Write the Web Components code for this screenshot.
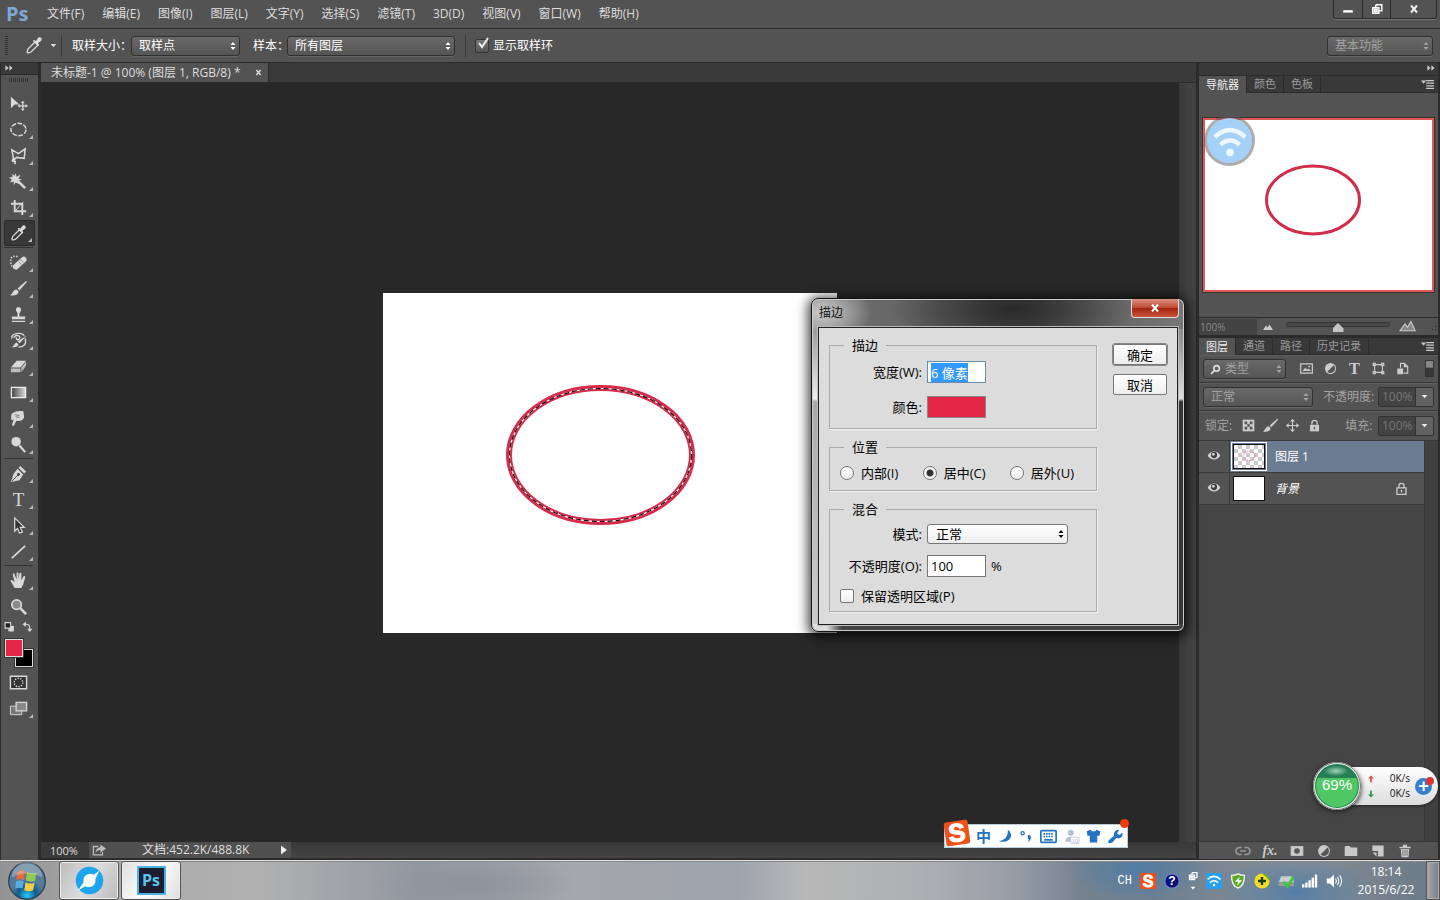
<!DOCTYPE html>
<html lang="zh-CN">
<head>
<meta charset="utf-8">
<title>未标题-1 @ 100%</title>
<style>
  html, body {
    height: 100%;
    margin: 0;
    overflow: hidden;
    background: #282828;
  }

  body {
    --line: #2b2b2b;
    --panel: #535353;
    --text: #dedede;
    --dim: #a3a3a3;
    --red: #e32645;
    color: var(--text);
    font: 12px/16px "Open Sans", "Noto Sans CJK SC", sans-serif;
  }
</style>
</head>
<body>
<photo-app></photo-app>

<script>
const icons = {
  move: `<path d="M2 3v12l4-4h5z"/><path d="M14.500 7l2 2.500h-1.300v2.300h2.300v-1.300l2.500 2-2.500 2v-1.300h-2.300v2.300h1.300l-2 2.500-2-2.500h1.300v-2.300h-2.300v1.300l-2.500-2 2.500-2v1.300h2.300V9.500h-1.300z"/>`,
  ellipse: `<ellipse cx="10" cy="10" rx="8" ry="6.500" fill="none" stroke="currentColor" stroke-width="1.500" stroke-dasharray="5 1.500"/>`,
  lasso: `<path d="M3 4l7 4 7-5-1 10-8-1-3 3zM6 13c-3 0-3 4-1 3s2 1 1 3" fill="none" stroke="currentColor" stroke-width="1.600"/>`,
  wand: `<path d="M7 1l1 4 4-2-2 4 4 1-4 1 1 4-4-2-2 3v-4l-4 1 2-3-3-2 4-1-1-3 3 2z"/><path d="M9 9l8 8" stroke="currentColor" stroke-width="2.500"/>`,
  crop: `<path d="M6 2v12h12M2 6h12v12" fill="none" stroke="currentColor" stroke-width="2"/><path d="M7 13l8-9" stroke="currentColor"/>`,
  dropper: `<path d="M4 17l-1-1 1-3 7-7 3 3-7 7z" fill="none" stroke="currentColor" stroke-width="1.300"/><path d="M9 5l1-1 2 1 2-3c2-2 5 1 3 3l-3 2 1 2-1 1z"/>`,
  heal: `<path d="M9 4c-5-2-8 1-7 6 0 3 1 4 3 6" fill="none" stroke="currentColor" stroke-width="1.600" stroke-dasharray="1.500 1.500"/><rect x="3" y="8" width="17" height="6" rx="3" transform="rotate(-42 11 11)"/><path d="M9 8l5 5M11 6l5 5" stroke="#666" stroke-dasharray="1 1"/>`,
  brush: `<path d="M18 2c1 0 1 1 0 2l-7 8-2-2zM8 11l2 2c0 4-4 5-9 4 3-1 3-6 7-6z"/>`,
  stamp: `<path d="M10 2a3 3 0 0 1 2 5l-1 2v3h6v3H3v-3h6V9L8 7a3 3 0 0 1 2-5zM3 16.500h14V18H3z"/>`,
  history: `<path d="M18 5c0 1-6 7-7 8l-2-2zM8 12l2 2c-1 4-5 3-7 3 3-2 2-4 5-5z"/><path d="M3 8c-2-6 11-7 13-3M5 7c2-4 8-2 6 1-1 2-4 1-3-1M17 8c2 6-2 9-7 9" fill="none" stroke="currentColor" stroke-width="1.500"/>`,
  eraser: `<path d="M8 4h10l-6 7H2z"/><path d="M2 12h10v4H2zM13 11l5-6v4l-5 7z" opacity=".8"/>`,
  gradient: `<defs><linearGradient id="g"><stop stop-color="#444"/><stop offset="1" stop-color="#ddd"/></linearGradient></defs><path d="M2.500 4.500h15v11h-15z" fill="url(#g)" stroke="#eee" stroke-width="1.300"/>`,
  smudge: `<path d="M3 5c3-3 7-3 12-3l1 7c-2 4-6 4-8 3l-3 6-2-1 2-6-2 1c-1-2-1-5 0-7z"/><path d="M7 8l4 1M6 6l5 1" stroke="#777"/>`,
  dodge: `<circle cx="7.500" cy="7" r="5"/><path d="M11 11l6 7" stroke="currentColor" stroke-width="2.300"/>`,
  pen: `<path d="M12 2l6 6-2 2-6-6zM9 5l6 6-4 6-9 2 3-9z"/><path d="M3 18l7-7" stroke="#444"/><circle cx="10" cy="11" r="1.500" fill="#444"/>`,
  type: `<text x="10" y="17" text-anchor="middle" font-size="20" font-family="Liberation Serif, serif" fill="currentColor">T</text>`,
  path: `<path d="M6 2v14l3-3 2 5 3-1-2-5h4z" fill="#333" stroke="currentColor" stroke-width="1.300"/>`,
  line: `<path d="M3 17L17 4" stroke="currentColor" stroke-width="1.800"/>`,
  hand: `<path d="M6 18l-4-7c-1-2 1-2 2-1l2 2-2-8c0-2 2-2 2 0l2 5V3c0-2 2-2 2 0v6l1-6c0-2 2-1 2 0v7l2-4c1-1 2-1 2 1l-2 7-2 4z"/>`,
  zoom: `<circle cx="8" cy="8" r="5" fill="#888" stroke="currentColor" stroke-width="1.800"/><path d="M12 12l6 6" stroke="currentColor" stroke-width="2.800"/>`,
  defaults: `<path d="M8 9h10v10H8z"/><path d="M2 3h10v10H2z" fill="#222" stroke="currentColor" stroke-width="2"/>`,
  swap: `<path d="M5 6c7-1 10 2 9 9" fill="none" stroke="currentColor" stroke-width="2"/><path d="M1 6l6-5v10zM9 14h10l-5 6z"/>`,
  mask: `<path d="M1.500 3.500h17v13h-17z" fill="#333" stroke="currentColor" stroke-width="1.500"/><circle cx="10" cy="10" r="4.500" fill="none" stroke="currentColor" stroke-width="1.400" stroke-dasharray="1.400 1.400"/>`,
  screens: `<path d="M1.500 7.500h12v9h-12z" fill="#777" stroke="currentColor"/><path d="M7.500 3.500h11v9h-11z" fill="#888" stroke="currentColor" stroke-width="1.400"/>`,
  updown: `<path d="M10 2l5 6H5zM5 12h10l-5 6z"/>`,
  down: `<path d="M2 6h16l-8 9z"/>`,
  right: `<path d="M4 1v18l12-9z"/>`,
  double: `<path d="M1 3v14l8-7zM11 3v14l8-7z"/>`,
  menu: `<path d="M0 4h8L4 9z"/><path d="M8 4h12M8 8h12M8 12h12M8 16h12" stroke="currentColor" stroke-width="1.800"/>`,
  mountain: `<path d="M0 16l6-9 3 4 4-6 7 11z"/>`,
  mountains: `<path d="M1 15L7 7l3 4 4-7 5 11z" fill="#888" stroke="currentColor" stroke-width="1.300"/>`,
  search: `<circle cx="12" cy="8" r="5" fill="none" stroke="currentColor" stroke-width="3"/><path d="M8 12l-6 6" stroke="currentColor" stroke-width="3"/>`,
  picture: `<path d="M1 3h18v14H1z" fill="#555" stroke="currentColor" stroke-width="1.800"/><path d="M4 14l4-5 3 3 2-2 4 4z"/><circle cx="14" cy="7" r="1.300"/>`,
  adjust: `<circle cx="10" cy="10" r="8.500"/><path d="M5 15L15 5a7 7 0 0 1-10 10z" fill="#555"/>`,
  boldType: `<text x="10" y="18" text-anchor="middle" font-size="25" font-weight="700" font-family="Liberation Serif, serif" fill="currentColor">T</text>`,
  shape: `<path d="M4 4h12v12H4z" fill="none" stroke="currentColor" stroke-width="1.700"/><path d="M1 1h5v5H1zM14 1h5v5h-5zM1 14h5v5H1zM14 14h5v5h-5z"/><path d="M3 3h1v1H3zM16 3h1v1h-1zM3 16h1v1H3zM16 16h1v1h-1z" fill="#333"/>`,
  smart: `<path d="M7 9V2h6l5 5v10h-6" fill="none" stroke="currentColor" stroke-width="1.800"/><path d="M12 2v6h6M2 10h9v9H2z"/>`,
  checker: `<path d="M1 1h18v18H1z"/><path d="M4 4h4v4H4zM12 4h4v4h-4zM8 8h4v4H8zM4 12h4v4H4zM12 12h4v4h-4z" fill="#555"/>`,
  cross: `<path d="M10 1v18M1 10h18" stroke="currentColor" stroke-width="1.800"/><path d="M10 0l4 4H6zM10 20l4-4H6zM0 10l4-4v8zM20 10l-4-4v8z"/>`,
  lock: `<path d="M6 9V6a4 4 0 0 1 8 0v3" fill="none" stroke="currentColor" stroke-width="2"/><path d="M3 9h14v10H3z"/><path d="M9 12h2v4H9z" fill="#555"/>`,
  openLock: `<path d="M6 9V6a4 4 0 0 1 8 0v3M3 9h14v10H3z" fill="none" stroke="currentColor" stroke-width="2"/><path d="M9 12h2v4H9z"/>`,
  eye: `<path d="M1 11c4-8 14-8 18 0-4 7-14 7-18 0z"/><circle cx="10" cy="10" r="4.500" fill="#444"/><circle cx="9" cy="9" r="2"/>`,
  link: `<path d="M8 5H5a5 5 0 0 0 0 10h3M12 5h3a5 5 0 0 1 0 10h-3M6 10h8" fill="none" stroke="#999" stroke-width="2.400"/>`,
  addMask: `<path d="M1 3h18v14H1z"/><circle cx="10" cy="10" r="4" fill="#555"/>`,
  folder: `<path d="M1 4l1-1h6l2 2h9v12H1z"/>`,
  newLayer: `<path d="M2 2h16v16h-8v-8H2z"/><path d="M2 12h6v6z"/>`,
  trash: `<path d="M2 4h16v2H2zM7 1h6v3H7zM4 7h12l-1 12H5z"/><path d="M7 8v9M10 8v9M13 8v9" stroke="#555"/>`,
  share: `<path d="M9 5H2v12h13v-4" fill="none" stroke="currentColor" stroke-width="1.800"/><path d="M12 2l8 6-8 6v-4c-4 0-5 2-7 4 1-6 4-8 7-8z"/>`,
  minimize: `<path d="M2 12h16v4H2z" fill="#fff"/>`,
  restore: `<path d="M8 3h10v10h-4M8 3v4M3 8h10v9H3zM6 11h4v3H6z" fill="none" stroke="#fff" stroke-width="2.500"/>`,
  close: `<path d="M4 3l12 14M16 3L4 17" stroke="currentColor" stroke-width="4"/>`,
  wifi: `<path d="M2 8c5-5 11-5 16 0M5 12c3-3 7-3 10 0" fill="none" stroke="currentColor" stroke-width="2.400"/><circle cx="10" cy="16" r="2"/>`,
  sogou: `<g transform="rotate(-8 10 10)"><rect width="20" height="20" rx="2" fill="#ef4f1a"/><text x="10" y="17" text-anchor="middle" font-size="21" font-weight="700" font-family="Liberation Sans, sans-serif" fill="#fff" stroke="#fff">S</text></g>`,
  sogouTile: `<rect width="20" height="20" rx="1" fill="#ef4f1a"/><text x="10" y="17" text-anchor="middle" font-size="20" font-weight="700" font-family="Liberation Sans, sans-serif" fill="#fff" stroke="#fff">S</text>`,
  moon: `<path d="M13 1c10 7 2 20-12 15C9 16 14 9 13 1z"/>`,
  punctuation: `<circle cx="4" cy="5" r="2.500" fill="none" stroke="currentColor" stroke-width="2"/><path d="M12 8c6-2 7 6 0 11 2-4 2-5 0-6z"/>`,
  keyboard: `<rect x="1" y="3" width="18" height="14" rx="1" fill="none" stroke="currentColor" stroke-width="2"/><path d="M4 7h12M4 10h12" stroke="currentColor" stroke-width="2" stroke-dasharray="2 1"/><path d="M5 14h10" stroke="currentColor" stroke-width="2"/>`,
  person: `<circle cx="9" cy="5" r="4"/><path d="M2 17c0-9 12-9 14 0z"/><path d="M9 11h11v8H9z" fill="#fff" stroke="currentColor"/><text x="10" y="18" font-size="8" fill="currentColor" font-family="Liberation Sans, sans-serif">10</text>`,
  shirt: `<path d="M1 3l5-2c2 3 6 3 8 0l5 2-1 6h-3v9H5V9H2z"/>`,
  wrench: `<path d="M2 19c-2 0-2-2-1-4l7-6c-1-5 3-9 7-8l-3 5 3 2 4-3c2 6-4 9-8 7l-5 6z"/>`,
  orb: `<defs><radialGradient id="o" cy=".9"><stop stop-color="#28c9f5"/><stop offset=".5" stop-color="#135b91"/><stop offset=".9" stop-color="#567b98"/></radialGradient></defs><circle cx="10" cy="10" r="9.600" fill="url(#o)" stroke="#283e50" stroke-width=".7"/><path d="M5 5q2-1 4 0l-.6 4.500q-2-1-4 0z" fill="#e8683a"/><path d="M10 5.300q3 1.200 5 .2l-.8 4.500q-2 .8-4.800-.2z" fill="#91c951"/><path d="M4.300 10.300q2-1 4 0L7.700 14q-2-1-4 0z" fill="#56aee0"/><path d="M9.200 10.700q2 1.200 4.800.2l-.8 4q-2 1-4.600-.2z" fill="#f7ce43"/><path d="M2 8a8 8 0 0 1 16 0q-8-4-16 0" fill="#fff" opacity=".28"/>`,
  browser: `<circle cx="10" cy="10" r="9.500" fill="#1ca4ed"/><path d="M17 3l-3 6c1 4-3 7-7 5l-5 3 4-6c-1-4 3-7 7-5z" fill="#fff"/>`,
  question: `<circle cx="10" cy="10" r="9" fill="#09107d" stroke="#7485b8" stroke-width="1.500"/><text x="10" y="15" text-anchor="middle" font-size="15" font-weight="700" font-family="Liberation Sans, sans-serif" fill="#fff">?</text>`,
  wifiTile: `<rect width="20" height="20" rx="2" fill="#28a0f2"/><path d="M2 8c5-5 11-5 16 0M5 12c3-3 7-3 10 0" fill="none" stroke="#fff" stroke-width="2"/><circle cx="10" cy="15" r="1.500" fill="#fff"/>`,
  shield: `<path d="M10 1c3 2 6 2 8 2 0 9-2 13-8 16C4 16 2 12 2 3c3 0 5 0 8-2z" fill="#5ca822" stroke="#eee" stroke-width="1.800"/><path d="M12 5l-6 6h4l-1 5 6-7h-4z" fill="#fff"/>`,
  plusBall: `<circle cx="10" cy="10" r="9.500" fill="#f5df24"/><path d="M10 .5a9.500 9.500 0 0 1 9.500 9.500q-4-6-9.500-9.500z" fill="#49a827"/><path d="M10 5v10M5 10h10" stroke="#143d12" stroke-width="3"/>`,
  drive: `<path d="M4 4h13l3 7v5H1v-5z" fill="#c9ced2"/><path d="M1 11h19v5H1z" fill="#999"/><path d="M7 11l5 6 7-12" fill="none" stroke="#41c545" stroke-width="3.500"/>`,
  signal: `<path d="M0 14h3v4H0zM4 12h3v6H4zM8 9h3v9H8zM12 6h3v12h-3zM16 2h3v16h-3z" fill="#fff"/>`,
  speaker: `<path d="M1 7h4l5-5v16l-5-5H1z" fill="#fff"/><path d="M12 7q2 3 0 6M14 5q4 5 0 10M17 3q5 7 0 14" fill="none" stroke="#fff" stroke-width="1.300"/>`,
  upload: `<path d="M10 1l7 8h-5v10H8V9H3z"/>`,
  download: `<path d="M10 19l7-8h-5V1H8v10H3z"/>`,
};

function define(name, css, html) {
  const template = document.createElement("template");
  template.innerHTML = `<style>* { box-sizing: border-box; }${css}</style>${html}`;
  customElements.define(name, class extends HTMLElement {
    connectedCallback() {
      if (this.shadowRoot) {
        return;
      }
      this.attachShadow({ mode: "open" }).append(template.content.cloneNode(true));
    }
  });
}

class AppIcon extends HTMLElement {
  connectedCallback() {
    if (this.shadowRoot) {
      return;
    }
    const shadow = this.attachShadow({ mode: "open" });
    shadow.innerHTML = `
      <style>
        :host { display: inline-block; flex: none; width: var(--size, 18px); height: var(--size, 18px); }
        svg { display: block; width: 100%; height: 100%; overflow: visible; }
      </style>
      <svg viewBox="0 0 20 20" fill="currentColor" aria-hidden="true">${icons[this.getAttribute("name")] ?? ""}</svg>
    `;
  }
}
customElements.define("app-icon", AppIcon);

const icon = (name, size) => `<app-icon name="${name}"${size ? ` style="--size:${size}px"` : ""}></app-icon>`;

// Tabs are styled by tab-strip, so the reset leaves them alone.
const controls = `
  input, select { margin: 0; font: inherit; color: inherit; }
  :where(button:not([role="tab"])) { display: inline-flex; align-items: center; justify-content: center; margin: 0; padding: 0; border: 0; background: none; font: inherit; color: inherit; }
  .select { display: inline-flex; position: relative; }
  .select select {
    appearance: none; width: 100%; height: 20px; padding: 0 16px 0 7px; border: 1px solid #303030; border-radius: 3px;
    background: linear-gradient(#696969, #555); box-shadow: 0 1px #666; line-height: 16px;
  }
  .select app-icon { --size: 10px; position: absolute; right: 2px; top: 5px; pointer-events: none; }
`;

define("menu-bar", `${controls}
  :host { display: flex; align-items: center; height: 29px; padding-left: 6px; background: var(--panel); border-bottom: 1px solid var(--line); }
  .logo { width: 25px; margin-right: 16px; color: #7ca8d8; font-size: 20px; font-weight: 700; line-height: 28px; }
  nav { display: flex; gap: 18px; flex: 1; }
  .window { display: flex; align-self: flex-start; height: 19px; margin-right: 3px; border: 1px solid #292929; border-top: 0; border-radius: 0 0 3px 3px; box-shadow: 0 1px #777; }
  .window button { width: 28px; --size: 12px; color: #eee; }
  .window button + button { border-left: 1px solid #292929; }
  .window button:last-child { width: 46px; }
`, `
  <span class="logo">Ps</span>
  <nav>
    ${["文件(F)", "编辑(E)", "图像(I)", "图层(L)", "文字(Y)", "选择(S)", "滤镜(T)", "3D(D)", "视图(V)", "窗口(W)", "帮助(H)"].map((label) => `<button>${label}</button>`).join("")}
  </nav>
  <div class="window">
    <button aria-label="最小化">${icon("minimize")}</button>
    <button aria-label="还原">${icon("restore")}</button>
    <button aria-label="关闭">${icon("close", 10)}</button>
  </div>
`);

define("options-bar", `${controls}
  :host { display: flex; align-items: center; height: 34px; padding: 0 7px 0 5px; background: var(--panel); border-bottom: 1px solid var(--line); color: #fff; }
  .grip { width: 3px; height: 20px; margin-right: 15px; background: repeating-linear-gradient(#333 0 1px, transparent 1px 2px); }
  .tool { gap: 6px; width: 35px; color: #ddd; }
  .rule { width: 1px; height: 22px; background: #3b3b3b; }
  .rule.first { margin: 0 10px 0 3px; }
  .rule.last { margin: 0 9px 0 10px; }
  label { white-space: nowrap; }
  #size { width: 109px; }
  #sample { width: 168px; }
  .size-label { width: 59px; }
  .sample-label { width: 34px; margin-left: 13px; }
  input { appearance: none; width: 14px; height: 14px; margin-right: 4px; border: 1px solid #333; border-radius: 2px; background: linear-gradient(#777, #555); }
  .check { display: flex; align-items: center; position: relative; }
  .check svg { position: absolute; left: 2px; top: -1px; width: 13px; height: 13px; }
  .workspace { margin-left: auto; color: var(--dim); }
  #workspace { width: 106px; }
`, `
  <span class="grip"></span>
  <button class="tool" aria-label="吸管工具">${icon("dropper", 20)}${icon("down", 7)}</button>
  <span class="rule first"></span>
  <label class="size-label" for="size">取样大小：</label>
  <span class="select"><select id="size"><option>取样点</option></select>${icon("updown")}</span>
  <label class="sample-label" for="sample">样本：</label>
  <span class="select"><select id="sample"><option>所有图层</option></select>${icon("updown")}</span>
  <span class="rule last"></span>
  <label class="check"><input type="checkbox" checked><svg viewBox="0 0 13 13"><path d="M2 6l3 4 6-9" fill="none" stroke="#eee" stroke-width="2"/></svg>显示取样环</label>
  <span class="select workspace"><select id="workspace" aria-label="工作区"><option>基本功能</option></select>${icon("updown")}</span>
`);

const tool = (name, label, more = true) => `<button class="tool${more ? " more" : ""}" aria-label="${label}">${icon(name)}</button>`;

define("tool-bar", `${controls}
  :host { display: flex; flex-direction: column; width: 41px; border: solid var(--line); border-width: 0 3px 0 1px; background: var(--panel); color: #d8d8d8; }
  .top { height: 12px; padding-left: 4px; background: #393939; border-bottom: 1px solid var(--line); --size: 8px; line-height: 10px; color: #ccc; }
  .grip { width: 20px; height: 4px; margin: 3px 8px 8px; background: repeating-linear-gradient(90deg, #333 0 1px, transparent 1px 2px); }
  .tool { position: relative; width: 31px; height: 26px; margin-left: 3px; padding-right: 2px; --size: 19px; }
  .more::after { content: ""; position: absolute; right: 2px; bottom: 3px; border: 2px solid; border-color: transparent #bbb #bbb transparent; }
  .on { border: 1px solid #2b2b2b; border-radius: 2px; background: #383838; }
  hr { width: 29px; height: 1px; margin: 1px 3px; border: 0; background: #333; }
  .mini { display: flex; justify-content: space-between; height: 16px; padding: 2px 5px 0 3px; --size: 11px; }
  .swatches { display: grid; grid-template-columns: 10px 8px 10px; grid-template-rows: 10px 8px 10px; margin: 4px 0 2px 4px; }
  .swatches button { border: 1px solid #ddd; outline: 1px solid #333; background: #000; }
  .swatches .fg { grid-area: 1 / 1 / 3 / 3; background: var(--red); z-index: 1; }
  .swatches .bg { grid-area: 2 / 2 / 4 / 4; }
`, `
  <div class="top">${icon("double")}</div>
  <div class="grip"></div>
  ${tool("move", "移动", false)}${tool("ellipse", "椭圆选框")}${tool("lasso", "多边形套索")}${tool("wand", "魔棒")}${tool("crop", "裁剪")}
  ${tool("dropper", "吸管").replace("tool more", "tool more on")}
  <hr>
  ${tool("heal", "修复画笔")}${tool("brush", "画笔")}${tool("stamp", "仿制图章")}${tool("history", "历史记录画笔")}${tool("eraser", "橡皮擦")}${tool("gradient", "渐变")}${tool("smudge", "涂抹")}${tool("dodge", "减淡")}
  <hr>
  ${tool("pen", "钢笔")}${tool("type", "文字")}${tool("path", "路径选择")}${tool("line", "直线")}
  <hr>
  ${tool("hand", "抓手")}${tool("zoom", "缩放", false)}
  <div class="mini">${icon("defaults")}${icon("swap")}</div>
  <div class="swatches"><button class="fg" aria-label="前景色"></button><button class="bg" aria-label="背景色"></button></div>
  ${tool("mask", "快速蒙版", false)}${tool("screens", "屏幕模式")}
`);

define("document-window", `${controls}
  :host { display: grid; grid-template: auto 1fr auto / 1fr 17px; min-width: 0; background: #282828; }
  .tabs { grid-column: 1 / -1; display: flex; height: 20px; background: #3a3a3a; border-bottom: 1px solid #2b2b2b; }
  .tab { display: flex; align-items: center; gap: 14px; padding: 0 6px 0 10px; background: var(--panel); border-right: 1px solid #2b2b2b; white-space: nowrap; --size: 7px; }
  .stage { display: grid; place-items: center; min-height: 0; overflow: hidden; }
  .art { display: block; width: 454px; height: 340px; background: #fff; }
  .scroll { background: linear-gradient(90deg, #383838, #424242 60%, #404040); }
  .status { grid-column: 1 / -1; display: flex; align-items: center; height: 18px; background: linear-gradient(#383838, #454545); border-bottom: 2px solid #2b2b2b; font-size: 11px; line-height: 14px; }
  .zoom { width: 48px; height: 16px; padding-left: 9px; border: 0; background: #3a3a3a; }
  .info { display: flex; align-items: center; width: 202px; height: 16px; padding: 0 2px 0 3px; background: #505050; }
  .info app-icon { color: #bbb; }
  .info button app-icon { color: #eee; }
  .info span { flex: 1; padding-left: 36px; font-size: 12px; }
`, `
  <div class="tabs"><div class="tab"><span>未标题-1 @ 100% (图层 1, RGB/8) *</span><button aria-label="关闭文档">${icon("close")}</button></div></div>
  <div class="stage">
    <svg class="art" viewBox="0 0 454 340">
      <ellipse cx="217.500" cy="162" rx="91.500" ry="67" fill="none" stroke="#d82a4a" stroke-width="6"/>
      <ellipse cx="217.500" cy="162" rx="91" ry="66.500" fill="none" stroke="#fff" stroke-width="1.200"/>
      <ellipse cx="217.500" cy="162" rx="91" ry="66.500" fill="none" stroke="#111" stroke-width="1.200" stroke-dasharray="5 3"/>
    </svg>
  </div>
  <div class="scroll"></div>
  <div class="status">
    <input class="zoom" aria-label="缩放比例" value="100%">
    <div class="info">${icon("share", 14)}<span>文档:452.2K/488.8K</span><button aria-label="状态选项">${icon("right", 10)}</button></div>
  </div>
`);

define("tab-strip", `
  :host { display: flex; height: 17px; background: #393939; border-bottom: 1px solid var(--line); color: #999; font-size: 11px; }
  ::slotted(button) { padding: 0 7px; margin: 0; border: 0; border-right: 1px solid var(--line); background: none; color: inherit; font: inherit; height: 16px; line-height: 16px; white-space: nowrap; }
  ::slotted(button[aria-selected="true"]) { height: 17px; background: var(--panel); color: #f0f0f0; }
  app-icon { margin: 2px 4px 0 auto; color: #ccc; }
`, `<slot></slot>${icon("menu", 13)}`);

define("navigator-panel", `
  :host { display: block; background: var(--panel); border-bottom: 3px solid var(--line); }
  .view { position: relative; margin: 25px 4px; }
  .view svg.map { display: block; width: 100%; background: #fff; border: 2px solid #e25757; outline: 1px solid #333; }
  .hotspot { position: absolute; left: 1px; top: -3px; display: grid; place-items: center; width: 51px; height: 51px; border: 3px solid rgba(90, 90, 90, .5); border-radius: 50%; background: #a4d1f7 padding-box; color: #eef7ff; }
  .bar { display: flex; align-items: center; height: 18px; border-top: 1px solid var(--line); color: #888; font-size: 10px; }
  .bar input.zoom { width: 58px; height: 16px; margin-right: 6px; padding: 0 0 0 1px; border: 0; background: #434343; color: inherit; font: inherit; }
  .bar app-icon { color: #ccc; }
  .range { appearance: none; flex: 1; min-width: 0; height: 5px; margin: 0 9px 4px 13px; border: 1px solid #333; border-radius: 3px; background: #484848; }
  .range::-webkit-slider-thumb { appearance: none; width: 11px; height: 9px; margin-top: 6px; background: #c5c5c5; clip-path: polygon(50% 0, 100% 60%, 100% 100%, 0 100%, 0 60%); }
  .corner { flex: none; width: 10px; height: 10px; margin-left: 12px; background: radial-gradient(circle, #222 1px, transparent 1px) 0 0 / 3px 3px; clip-path: polygon(100% 0, 100% 100%, 0 100%); }
`, `
  <tab-strip role="tablist"><button role="tab" aria-selected="true">导航器</button><button role="tab">颜色</button><button role="tab">色板</button></tab-strip>
  <div class="view">
    <svg class="map" viewBox="0 0 227 170"><ellipse cx="108" cy="80" rx="46.500" ry="34" fill="none" stroke="#d22c4a" stroke-width="3"/></svg>
    <span class="hotspot">${icon("wifi", 38)}</span>
  </div>
  <div class="bar">
    <input class="zoom" aria-label="导航器缩放" value="100%">${icon("mountain", 10)}
    <input class="range" type="range" aria-label="缩放" value="50">${icon("mountains", 17)}<span class="corner"></span>
  </div>
`);

define("layer-row", `
  :host { display: flex; align-items: center; height: 32px; background: var(--panel); border-bottom: 1px solid #3b3b3b; color: #fff; }
  :host([selected]) { background: linear-gradient(90deg, var(--panel) 31px, #6b7c92 31px); }
  .eye { width: 31px; height: 31px; padding: 0; border: 0; border-right: 1px solid #3b3b3b; background: none; color: #d5d5d5; }
  .eye app-icon { color: inherit; }
  .thumb { width: 32px; height: 25px; margin: 0 10px 0 3px; border: 1px solid #111; background: #fff; outline: 0 solid #fff; }
  :host([selected]) .thumb { background: repeating-conic-gradient(#ccc 0 25%, #fff 0 50%) 0 0 / 8px 8px; outline: 1px solid #fff; outline-offset: 1px; }
  svg { display: none; }
  :host([selected]) svg { display: block; }
  app-icon { color: #ccc; }
  .lock { display: none; margin: 0 16px 0 auto; }
  :host([locked]) .lock { display: block; }
  :host([locked]) slot { font-style: italic; }
`, `
  <button class="eye" aria-label="显示图层">${icon("eye", 14)}</button>
  <span class="thumb"><svg viewBox="0 0 30 23"><ellipse cx="15" cy="11" rx="6" ry="4.500" fill="none" stroke="#d98b98" stroke-dasharray="2 1"/></svg></span>
  <slot></slot><app-icon class="lock" name="openLock" style="--size:13px"></app-icon>
`);

define("layers-panel", `${controls}
  :host { display: flex; flex: 1; flex-direction: column; min-height: 0; background: #454545; }
  .row { display: flex; align-items: center; background: var(--panel); border-bottom: 1px solid #393939; padding: 0 4px; color: var(--dim); box-shadow: inset 0 1px #5f5f5f; }
  .filter, .blend { height: 28px; }
  .lock { height: 30px; padding-left: 6px; }
  .filter .select { width: 83px; margin-right: 8px; }
  .filter select { padding-left: 21px; }
  .filter .select app-icon.lens { --size: 11px; left: 7px; right: auto; color: #ddd; }
  .filter > button { width: 24px; --size: 13px; color: #ccc; }
  .switch { width: 9px; height: 17px; margin-left: auto; border: 1px solid #333; background: linear-gradient(#888 40%, #383838 50%); }
  .blend .select { width: 110px; margin-right: 10px; }
  .number { display: flex; width: 56px; height: 20px; margin-left: auto; border: 1px solid #333; border-radius: 2px; background: #434343; }
  .number input { width: 36px; height: 18px; padding: 0 0 0 3px; border: 0; background: none; color: #777; }
  .number button { flex: 1; border-left: 1px solid #333; background: #626262; color: #eee; }
  .lock > button { width: 22px; --size: 13px; color: #ccc; }
  .lock > .name { margin-right: 5px; }
  .fill { margin-left: 20px; }
  .body { display: grid; grid-template-columns: 1fr 14px; flex: 1; }
  .scroll { background: #404040; border-left: 1px solid #383838; }
  .actions { display: flex; align-items: center; justify-content: flex-end; gap: 13px; height: 19px; padding-right: 26px; background: var(--panel); border-top: 1px solid #363636; border-bottom: 1px solid #2b2b2b; --size: 14px; color: #c9c9c9; }
  .fx { width: 14px; font: italic bold 14px/14px "Liberation Serif", serif; }
`, `
  <tab-strip role="tablist"><button role="tab" aria-selected="true">图层</button><button role="tab">通道</button><button role="tab">路径</button><button role="tab">历史记录</button></tab-strip>
  <div class="row filter">
    <span class="select"><app-icon class="lens" name="search"></app-icon><select aria-label="图层过滤"><option>类型</option></select>${icon("updown")}</span>
    <button aria-label="像素">${icon("picture")}</button><button aria-label="调整">${icon("adjust")}</button><button aria-label="文字">${icon("boldType")}</button><button aria-label="形状">${icon("shape")}</button><button aria-label="智能对象">${icon("smart")}</button>
    <span class="switch"></span>
  </div>
  <div class="row blend">
    <span class="select"><select aria-label="混合模式"><option>正常</option></select>${icon("updown")}</span>
    <label for="opacity">不透明度:</label><span class="number"><input id="opacity" value="100%"><button aria-label="调整不透明度">${icon("down", 7)}</button></span>
  </div>
  <div class="row lock">
    <span class="name">锁定:</span>
    <button aria-label="锁定透明">${icon("checker")}</button><button aria-label="锁定像素">${icon("brush", 17)}</button><button aria-label="锁定位置">${icon("cross")}</button><button aria-label="锁定全部">${icon("lock")}</button>
    <label class="fill" for="fill">填充:</label><span class="number"><input id="fill" value="100%"><button aria-label="调整填充">${icon("down", 7)}</button></span>
  </div>
  <div class="body">
    <div><layer-row selected>图层 1</layer-row><layer-row locked>背景</layer-row></div>
    <div class="scroll"></div>
  </div>
  <div class="actions">
    ${icon("link")}<button class="fx" aria-label="图层样式">fx.</button>${icon("addMask")}${icon("adjust")}${icon("folder")}${icon("newLayer")}${icon("trash")}
  </div>
`);

define("side-panels", `
  :host { display: flex; flex-direction: column; width: 244px; border: solid var(--line); border-width: 0 2px 0 3px; }
  .top { height: 13px; padding-right: 3px; text-align: right; line-height: 10px; background: #393939; border-bottom: 1px solid var(--line); color: #ccc; }
`, `<div class="top">${icon("double", 8)}</div><navigator-panel></navigator-panel><layers-panel></layers-panel>`);

define("option-group", `
  :host { display: block; }
  fieldset { display: flex; flex-direction: column; gap: 10px; min-width: 0; margin: 0; padding: var(--group-pad, 8px 10px); border: 1px solid #aaa; box-shadow: 1px 1px #f2f2f2; }
  legend { margin-left: 4px; padding: 0 8px; line-height: 18px; background: #dcdcdc; }
  :host([loose]) fieldset { gap: 13px; }
`, `<fieldset><legend><slot name="title"></slot></legend><slot></slot></fieldset>`);

define("stroke-dialog", `${controls}
  :host { display: block; width: 374px; padding: 0 6px 6px; border: 1px solid #151515; border-radius: 7px; color: #000; font-size: 13px; line-height: 18px;
    background:
      radial-gradient(ellipse 50px 30px at 10px 14px, #c8c8c8, transparent) no-repeat 0 0 / 100% 30px,
      radial-gradient(ellipse 120px 50px at 200px 10px, #292929, transparent) no-repeat 0 0 / 100% 30px,
      linear-gradient(90deg, #888, #6a6a6a 15%, #555 60%, #777) no-repeat 0 0 / 100% 30px,
      linear-gradient(90deg, #ddd 4%, #444 8%) 0 100% / 100% 7px no-repeat,
      linear-gradient(#666, #ddd 30%, #333 31%) 100% 0 / 7px 100% no-repeat,
      linear-gradient(#777, #eee 30%, #aaa 31%, #ccc);
    box-shadow: inset 0 0 0 1px #ccc, 0 2px 12px 3px rgba(0, 0, 0, .75); }
  header { display: flex; justify-content: space-between; height: 28px; padding-left: 1px; color: #111; font-size: 12px; line-height: 28px; }
  header button { width: 48px; height: 19px; margin-right: -1px; border: 1px solid #ddd; border-top: 0; border-radius: 0 0 4px 4px; background: linear-gradient(#d99281, #bf4a33 48%, #a12312 50%, #ca5439); color: #fff; --size: 10px; }
  .content { display: flex; gap: 16px; min-height: 298px; padding: 8px 10px 12px; border: 1px solid #222; outline: 1px solid #bbb; background: #dcdcdc; }
  .groups { width: 268px; display: flex; flex-direction: column; justify-content: space-between; }
  .buttons { flex: 1; display: flex; flex-direction: column; gap: 9px; padding-top: 8px; }
  .buttons button { height: 21px; border: 1px solid #777; border-radius: 2px; background: linear-gradient(#fff, #eee); }
  .buttons .default { outline: 1px solid #888; }
  .row { display: flex; align-items: center; gap: 5px; min-height: 22px; }
  .row > label:first-child { width: 82px; text-align: right; }
  .text { width: 59px; height: 22px; padding: 0 3px; border: 1px solid #777; background: #fff; outline: 0; }
  #width { border-color: #6c8aad; }
  #width::selection { background: #3399ff; color: #fff; }
  .swatch { width: 59px; height: 22px; border: 1px solid #888; background: var(--red); }
  .select select { width: 141px; height: 20px; padding-left: 8px; border-color: #777; box-shadow: none; background: linear-gradient(#fff, #eee); }
  .radios { display: flex; justify-content: space-between; padding: 0 12px 0 0; }
  .radios label, .check { display: flex; align-items: center; gap: 7px; min-height: 18px; }
  .radios input, .check input { appearance: none; width: 14px; height: 14px; border: 1px solid #777; background: linear-gradient(#fff, #eee); }
  .radios input { border-radius: 50%; }
  .radios input:checked { background: radial-gradient(circle, #333 0 3px, #f5f5f5 4px); }
  .check input { border-radius: 2px; }
  .stroke { --group-pad: 7px 10px 10px; }
  .blend { --group-pad: 5px 10px 6px; }
`, `
  <header><span>描边</span><button aria-label="关闭">${icon("close")}</button></header>
  <div class="content">
    <div class="groups">
      <option-group class="stroke" loose><span slot="title">描边</span>
        <div class="row"><label for="width">宽度(W):</label><input id="width" class="text" value="6 像素"></div>
        <div class="row"><label for="color">颜色:</label><button id="color" class="swatch" aria-label="颜色"></button></div>
      </option-group>
      <option-group><span slot="title">位置</span>
        <div class="radios"><label><input type="radio" name="place">内部(I)</label><label><input type="radio" name="place" checked>居中(C)</label><label><input type="radio" name="place">居外(U)</label></div>
      </option-group>
      <option-group class="blend"><span slot="title">混合</span>
        <div class="row"><label for="mode">模式:</label><span class="select"><select id="mode"><option>正常</option></select>${icon("updown")}</span></div>
        <div class="row"><label for="alpha">不透明度(O):</label><input id="alpha" class="text" value="100"><span>%</span></div>
        <label class="check"><input type="checkbox">保留透明区域(P)</label>
      </option-group>
    </div>
    <div class="buttons"><button class="default">确定</button><button>取消</button></div>
  </div>
`);

define("input-method", `
  :host { display: flex; align-items: center; justify-content: space-between; width: 184px; height: 24px; padding: 0 4px 0 0; background: #fff; border: 1px solid #b8cede; color: #2374c2; --size: 15px; }
  .logo { --size: 24px; margin-top: -2px; }
  b { font: 700 15px/20px "Noto Sans CJK SC", sans-serif; }
  .muted { color: #b9bfd2; }
  .last { position: relative; height: 15px; }
  .last::after { content: ""; position: absolute; right: -6px; top: -10px; width: 9px; height: 9px; border-radius: 50%; background: #f23c07; }
`, `<span class="logo"><app-icon name="sogou"></app-icon></span><b>中</b>${icon("moon")}${icon("punctuation", 13)}${icon("keyboard", 17)}<app-icon class="muted" name="person"></app-icon>${icon("shirt")}<span class="last">${icon("wrench")}</span>`);

define("speed-meter", `
  :host { display: flex; align-items: center; width: 125px; height: 48px; color: #111; font: 10px/15px "Open Sans", sans-serif; }
  .ball { position: relative; z-index: 1; width: 48px; height: 48px; border: 2px solid #eee; border-radius: 50%; outline: 1px solid #777; outline-offset: -1px; background: radial-gradient(ellipse 12px 5px at 21px 7px, #9fd3bb, transparent), linear-gradient(#278055 31%, #4fc765 32%); box-shadow: inset 0 0 0 1px #207c4c, 0 2px 5px #222; color: #fff; font: 15px/42px "Liberation Sans", sans-serif; text-align: center; }
  .pill { flex: 1; display: flex; align-items: center; height: 38px; margin-left: -24px; padding: 0 6px 0 30px; border-radius: 0 19px 19px 0; background: linear-gradient(#fff, #ddd); box-shadow: 0 1px 3px #222; }
  .arrows { display: grid; gap: 7px; --size: 8px; color: #dc4b3b; }
  .arrows app-icon + app-icon { color: #23924e; }
  .rates { flex: 1; text-align: right; margin-right: 5px; }
  .plus { position: relative; width: 17px; height: 17px; border-radius: 50%; background: #357ed2; color: #fff; font: 700 18px/16px "Liberation Sans", sans-serif; text-align: center; }
  .plus::after { content: ""; position: absolute; top: -1px; right: -2px; width: 8px; height: 8px; border-radius: 50%; background: #dc3632; }
`, `<div class="ball">69%</div><div class="pill"><div class="arrows">${icon("upload")}${icon("download")}</div><div class="rates">0K/s<br>0K/s</div><div class="plus">+</div></div>`);

define("task-bar", `${controls}
  :host { display: flex; align-items: center; height: 40px; padding-left: 8px; border-top: 1px solid #dedede; box-shadow: inset 0 1px #888; color: #fff;
    background: radial-gradient(ellipse 70px 32px at 79% 20%, #527da4, transparent), radial-gradient(ellipse 80px 40px at 90% 80%, #557fa6, transparent), radial-gradient(ellipse 100px 30px at 33% 60%, #8d949e, transparent), linear-gradient(90deg, #939393, #aaa 8%, #b1b1b1 18%, #9298a0 29%, #a5a8ac 40%, #9da4ad 51%, #b8b8b8 56%, #adafb2 64%, #999fa8 70%, #76838f 75%, #6c7f92 80%, #8c8f93 90%, #687988); }
  .start { --size: 38px; margin-right: 13px; }
  .app { width: 60px; height: 39px; margin-right: 2px; border: 1px solid #555; border-radius: 3px; background: linear-gradient(120deg, #bbb, #ddd 50%, #bbb); box-shadow: inset 0 0 0 1px #eee; --size: 29px; }
  .app.active { background: linear-gradient(120deg, #ddd, #fff 50%, #ddd); }
  .ps { width: 29px; height: 29px; border: 2px solid #48b4df; background: #1c1d31; color: #5bc4ee; font: 700 16px/24px "Open Sans", sans-serif; }
  .tray { display: flex; align-items: center; gap: 8px; margin-left: auto; --size: 16px; }
  .ch { font: 12px/16px "Liberation Mono", monospace; }
  .expand { display: flex; flex-direction: column; align-items: center; gap: 4px; }
  time { width: 66px; margin: 0 0 0 3px; font-size: 12px; line-height: 18px; text-align: center; }
  .desktop { width: 14px; height: 39px; margin-left: -1px; border: 1px solid #555; background: linear-gradient(90deg, #aaa, #737d88); box-shadow: inset 0 0 0 1px #aaa; }
`, `
  <button class="start" aria-label="开始">${icon("orb")}</button>
  <button class="app" aria-label="浏览器">${icon("browser")}</button>
  <button class="app active" aria-label="Photoshop"><span class="ps">Ps</span></button>
  <div class="tray"><span class="ch">CH</span>${icon("sogouTile")}${icon("question")}<span class="expand">${icon("restore", 10)}${icon("down", 6)}</span>${icon("wifiTile")}${icon("shield")}${icon("plusBall")}${icon("drive")}${icon("signal")}${icon("speaker")}<time datetime="2015-06-22T18:14">18:14<br>2015/6/22</time><button class="desktop" aria-label="显示桌面"></button></div>
`);

define("photo-app", `
  :host { display: grid; grid-template-rows: auto auto 1fr auto; position: relative; min-width: 0; height: 100%; }
  main { display: grid; grid-template-columns: auto 1fr auto; min-height: 0; }
  stroke-dialog { position: absolute; right: 255px; top: 298px; }
  input-method { position: absolute; right: 312px; bottom: 52px; }
  speed-meter { position: absolute; right: 2px; bottom: 90px; }
`, `
  <menu-bar></menu-bar>
  <options-bar></options-bar>
  <main><tool-bar></tool-bar><document-window></document-window><side-panels></side-panels></main>
  <task-bar></task-bar>
  <stroke-dialog role="dialog" aria-label="描边"></stroke-dialog>
  <input-method></input-method>
  <speed-meter></speed-meter>
`);

const dialog = document.querySelector("photo-app").shadowRoot.querySelector("stroke-dialog");
dialog.shadowRoot.querySelector("#width").select();
dialog.shadowRoot.querySelector("#width").focus();
</script>
</body>
</html>
